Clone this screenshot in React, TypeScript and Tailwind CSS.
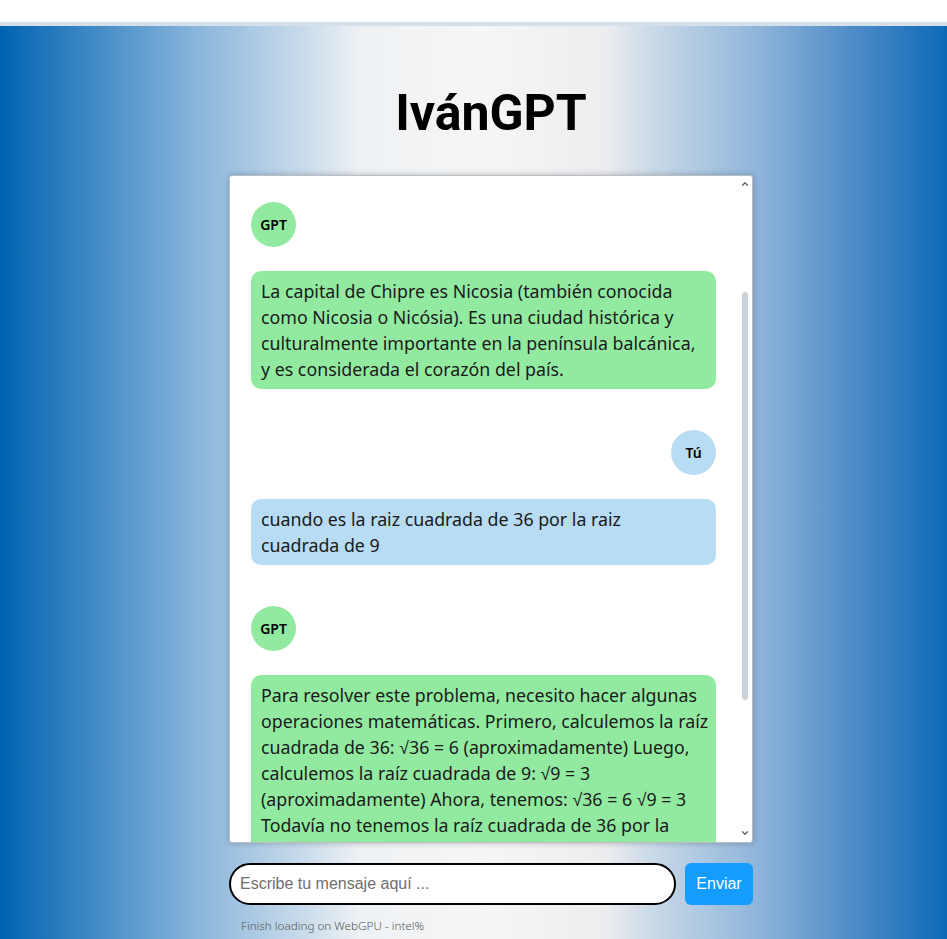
import { ChevronUp, ChevronDown } from "lucide-react";

type Msg = {
  from: "gpt" | "me";
  lines: string[];
};

const messages: Msg[] = [
  {
    from: "gpt",
    lines: [
      "La capital de Chipre es Nicosia (también conocida",
      "como Nicosia o Nicósia). Es una ciudad histórica y",
      "culturalmente importante en la península balcánica,",
      "y es considerada el corazón del país.",
    ],
  },
  {
    from: "me",
    lines: ["cuando es la raiz cuadrada de 36 por la raiz", "cuadrada de 9"],
  },
  {
    from: "gpt",
    lines: [
      "Para resolver este problema, necesito hacer algunas",
      "operaciones matemáticas. Primero, calculemos la raíz",
      "cuadrada de 36: √36 = 6 (aproximadamente) Luego,",
      "calculemos la raíz cuadrada de 9: √9 = 3",
      "(aproximadamente) Ahora, tenemos: √36 = 6 √9 = 3",
      "Todavía no tenemos la raíz cuadrada de 36 por la",
      "raíz cuadrada de 9. Para obtenerla, multiplicamos:",
      "6 × 3 = 18.",
    ],
  },
];

const Avatar = ({ from }: { from: Msg["from"] }) => (
  <div
    className={`w-[45px] h-[45px] rounded-full flex items-center justify-center text-[14px] font-semibold text-black ${
      from === "gpt" ? "bg-[#92eaa1]" : "bg-[#b8dcf4] self-end"
    }`}
  >
    {from === "gpt" ? "GPT" : "Tú"}
  </div>
);

const Message = ({ msg, first }: { msg: Msg; first: boolean }) => (
  <div className={`flex flex-col ${first ? "" : "mt-[41px]"}`}>
    <Avatar from={msg.from} />
    <div
      className={`mt-[24px] rounded-[10px] px-[10px] py-[7px] text-[17.8px] leading-[26px] text-[#1a1a1a] whitespace-nowrap ${
        msg.from === "gpt" ? "bg-[#92eaa1]" : "bg-[#b8dcf4]"
      }`}
    >
      {msg.lines.map((l, i) => (
        <div key={i}>{l}</div>
      ))}
    </div>
  </div>
);

export default function App() {
  return (
    <div className="min-h-[939px] flex flex-col font-['Noto_Sans',sans-serif]">
      <div className="h-[22px] bg-white" />
      <div className="h-[4px] bg-[#d5e0ea]" />
      <main className="flex-1 flex flex-col items-center pl-[35px] bg-[linear-gradient(to_right,#0063b1_0%,#8ab6dc_21%,#c9dbeb_32%,#eef1f4_38%,#f6f6f6_51%,#ededf0_64%,#c9d9e8_69%,#8fb5da_80%,#5590c9_89%,#0d69b7_100%)]">
        <h1 className="mt-[57px] text-[50px] leading-[61px] font-bold text-black font-['Roboto',sans-serif]">
          IvánGPT
        </h1>
        <div className="mt-[31px] w-[524px]">
          <div className="h-[668px] flex bg-white border border-[#b9bec4] rounded-[3px] shadow-[0_0_6px_rgba(0,0,0,0.25)] overflow-hidden">
            <div className="flex-1 pl-[21px] pr-[21px] pt-[26px] flex flex-col overflow-hidden">
              {messages.map((m, i) => (
                <Message key={i} msg={m} first={i === 0} />
              ))}
            </div>
            <div className="w-[15px] flex flex-col items-center text-[#606060]">
              <ChevronUp size={10} strokeWidth={3} className="mt-[3px]" />
              <div className="mt-[103px] w-[6px] h-[408px] rounded-full bg-[#cbd2da]" />
              <div className="flex-1" />
              <ChevronDown size={10} strokeWidth={3} className="mb-[4px]" />
            </div>
          </div>
          <div className="mt-[20px] flex gap-[9px]">
            <input
              placeholder="Escribe tu mensaje aquí ..."
              className="flex-1 h-[42px] border-2 border-black rounded-full bg-white pl-[9px] text-[16px] leading-[20px] font-['Liberation_Sans',Arial,sans-serif] placeholder:text-[#6f6f6f] outline-none"
            />
            <button className="w-[68px] h-[42px] rounded-[6px] bg-[#149dff] text-white text-[16px] font-['Liberation_Sans',Arial,sans-serif]">
              Enviar
            </button>
          </div>
          <div className="mt-[12px] pl-[12px] text-[11.7px] text-[#555] font-light">
            Finish loading on WebGPU - intel%
          </div>
        </div>
      </main>
    </div>
  );
}
